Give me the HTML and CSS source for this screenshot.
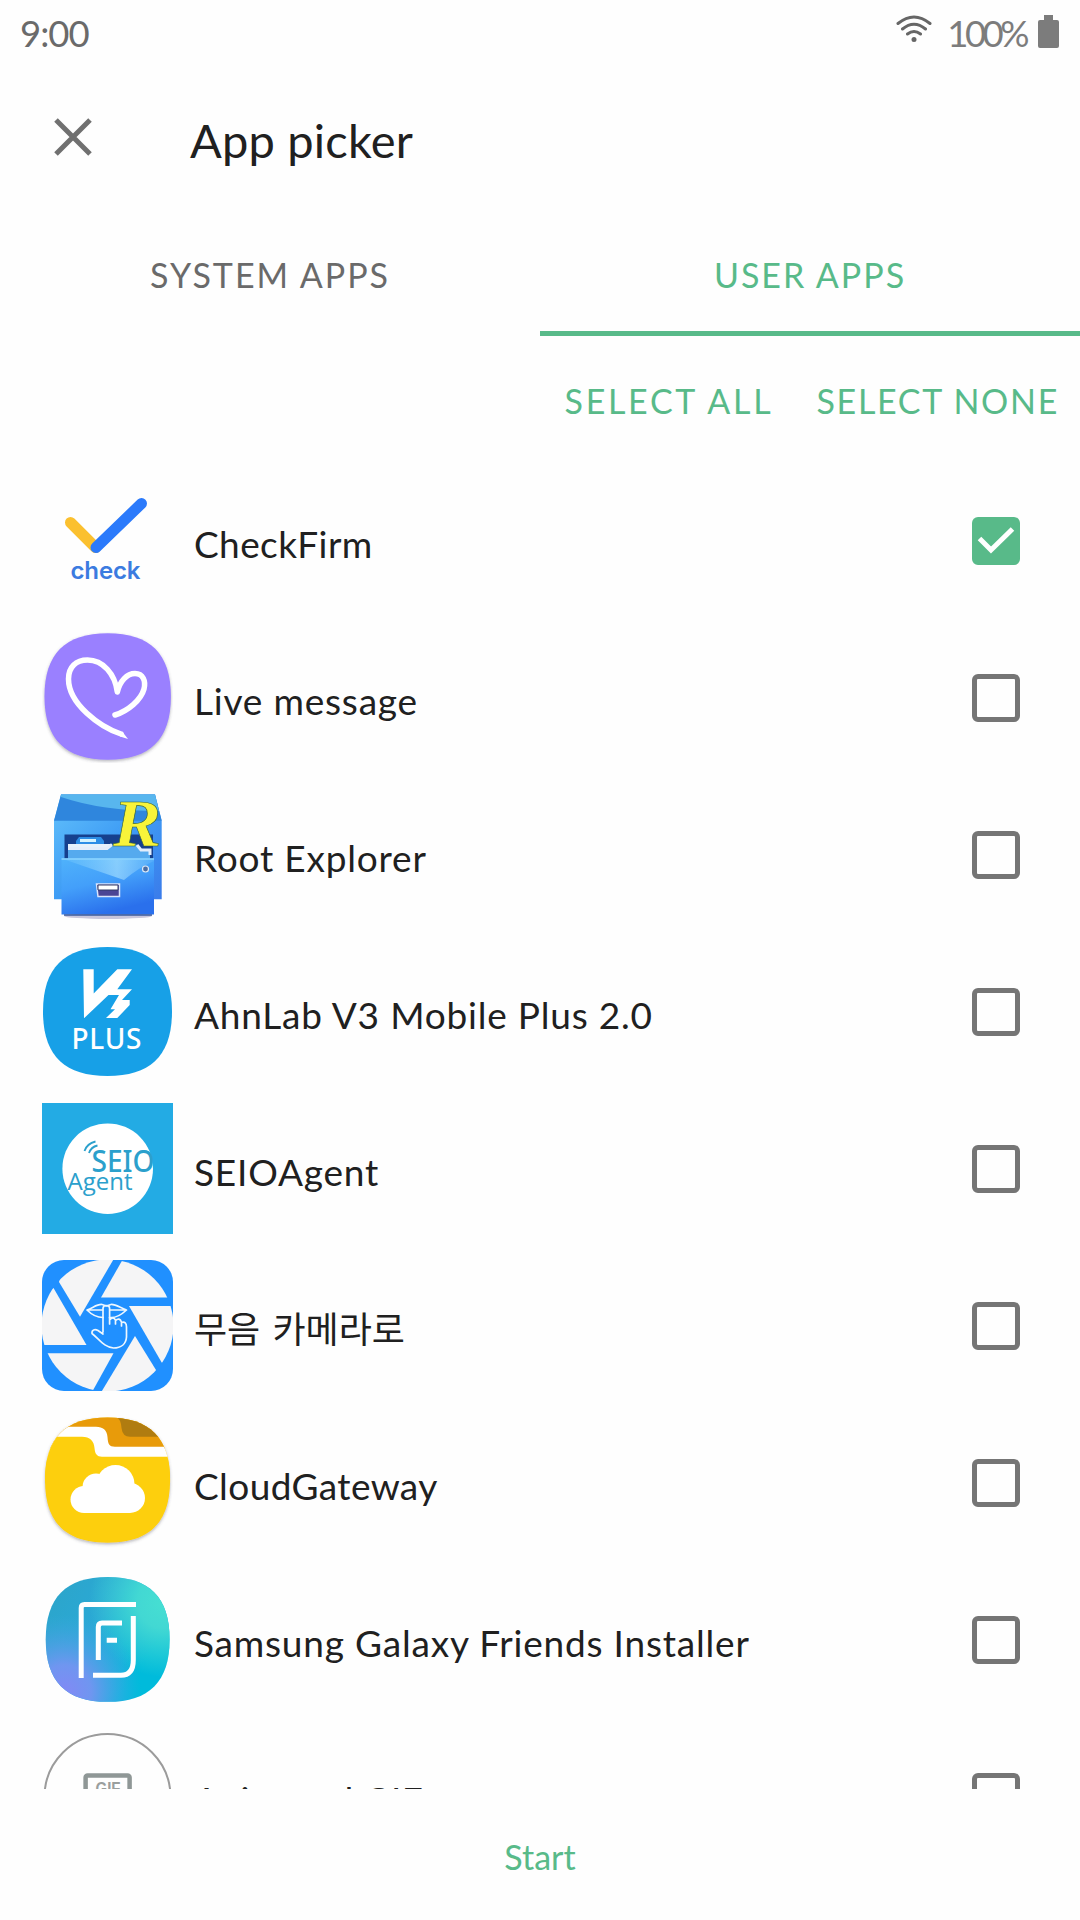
FILE: index.html
```
<!DOCTYPE html>
<html lang="en">
<head>
  <meta charset="UTF-8">
  <meta name="viewport" content="width=device-width, initial-scale=1.0">
  <title>App picker</title>
  <link rel="stylesheet" href="styles.css">
</head>
<body>
  <!-- Shared shapes -->
  <svg class="defs" width="0" height="0">
    <defs>
      <path id="squircle" d="M65.500 1C109 1 130 22 130 65.500S109 130 65.500 130 1 109 1 65.500 22 1 65.500 1Z"/>
      <clipPath id="squircleClip"><use href="#squircle" transform="translate(2 -.4) scale(.97)"/></clipPath>
      <clipPath id="lensClip"><circle cx="65.5" cy="65.5" r="66"/></clipPath>
      <linearGradient id="cabinet" x1="0" y1="0" x2="1" y2="1">
        <stop offset="0" stop-color="#63c2fb"/><stop offset=".5" stop-color="#3f9df5"/><stop offset="1" stop-color="#3a7bea"/>
      </linearGradient>
      <linearGradient id="drawer" x1="0" y1="0" x2=".4" y2="1">
        <stop offset="0" stop-color="#4fb2fb"/><stop offset=".5" stop-color="#439ffa"/><stop offset="1" stop-color="#2a70ec"/>
      </linearGradient>
      <linearGradient id="shine" x1="0" y1="0" x2="1" y2="0">
        <stop offset="0" stop-color="#7fd0ff" stop-opacity=".2"/><stop offset=".6" stop-color="#b9ecff" stop-opacity=".55"/><stop offset="1" stop-color="#b9ecff" stop-opacity=".1"/>
      </linearGradient>
      <radialGradient id="friendsTop" cx=".95" cy=".2" r=".6">
        <stop offset="0" stop-color="#46dfd2"/><stop offset=".35" stop-color="#42d8d3"/><stop offset="1" stop-color="#42d8d3" stop-opacity="0"/>
      </radialGradient>
      <radialGradient id="friendsLeft" cx=".15" cy=".92" r=".62">
        <stop offset="0" stop-color="#8289f5"/><stop offset=".35" stop-color="#6f96f0"/><stop offset="1" stop-color="#3fa6e4" stop-opacity="0"/>
      </radialGradient>
      <linearGradient id="friendsBase" x1="0" y1="0" x2="1" y2=".7">
        <stop offset=".1" stop-color="#2ca5cb"/><stop offset=".45" stop-color="#2aa9d6"/><stop offset=".85" stop-color="#00bbdb"/>
      </linearGradient>
      <filter id="soft" x="-10%" y="-10%" width="120%" height="120%">
        <feDropShadow dx="0" dy="1.5" stdDeviation="1.5" flood-color="#445" flood-opacity=".4"/>
      </filter>
    </defs>
  </svg>

  <div class="screen">
    <div class="status-bar">
      <span class="clock">9:00</span>
      <div class="status-icons">
        <svg class="wifi" width="36" height="30" viewBox="0 0 36 30" fill="none" stroke="#666" stroke-width="3" stroke-linecap="round">
          <path d="M2 9.500Q18-3.500 34 9.500M6.500 15Q18 5.500 29.500 15M11.500 20Q18 15 24.500 20"/>
          <circle cx="18" cy="25.500" r="2.500" fill="#666" stroke="none"/>
        </svg>
        <span class="battery-level">100%</span>
        <svg class="battery" width="21" height="33" viewBox="0 0 21 33" fill="#7c7c7c">
          <path d="M6 0h9v5h4a2 2 0 0 1 2 2v24a2 2 0 0 1-2 2H2a2 2 0 0 1-2-2V7a2 2 0 0 1 2-2h4z"/>
        </svg>
      </div>
    </div>

    <div class="toolbar">
      <svg class="close" width="38" height="38" viewBox="0 0 38 38" stroke="#707070" stroke-width="5">
        <path d="M2 2 36 36M36 2 2 36"/>
      </svg>
      <h1>App picker</h1>
    </div>

    <div class="tabs">
      <div class="tab">SYSTEM APPS</div>
      <div class="tab active">USER APPS</div>
    </div>

    <div class="actions">
      <span class="action-all">SELECT ALL</span>
      <span>SELECT NONE</span>
    </div>

    <div class="app-list">
      <div class="app">
        <svg class="icon" viewBox="0 0 131 131">
          <g fill="none" stroke-width="11" stroke-linecap="round">
            <path d="M28.500 47.500 53.500 72.500" stroke="#fbc02f"/>
            <path d="M54 72.500 99.500 28.500" stroke="#2b7afb"/>
          </g>
          <text x="28.500" y="104" class="check-label" textLength="70">check</text>
        </svg>
        <span class="name tight">CheckFirm</span>
        <span class="checkbox checked">
          <svg width="48" height="48" viewBox="0 0 48 48" fill="none" stroke="#fff" stroke-width="5"><path d="M7.500 21.500 19 33 40.500 12"/></svg>
        </span>
      </div>

      <div class="app">
        <svg class="icon" viewBox="0 0 131 131">
          <use href="#squircle" fill="#9a80ff" transform="translate(1.500 .3) scale(.98)" filter="url(#soft)"/>
          <path d="M79 102C58 95 26.500 72 26.500 47 26.500 35 34 28 45.500 28 61 28 73 42 75.300 60 78 49 85 41.500 93 41.500 101 41.500 104 49 102 57 99 68 86 79 73 83" fill="none" stroke="#fff" stroke-width="5.500" stroke-linecap="round" stroke-linejoin="round"/>
          <path d="M80 99.300 86 107 78 104.500Z" fill="#fff"/>
        </svg>
        <span class="name">Live message</span>
        <span class="checkbox"></span>
      </div>

      <div class="app">
        <svg class="icon" viewBox="0 0 131 131">
          <ellipse cx="66" cy="127" rx="44" ry="3" fill="#c9c6dc"/>
          <path d="M19 5.500H113L119.700 31.700V110.300H12V31.700Z" fill="url(#cabinet)"/>
          <path d="M19 5.500H113L119.700 31.700H12Z" fill="#2f86dd"/>
          <path d="M19 5.500H113L117 22Q60 22 19 8Z" fill="#58b6ee"/>
          <path d="M22.500 45.500H111V70H22.500Z" fill="#16408e"/>
          <path d="M34 52 37 48H59L62 52V58H34Z" fill="#2c8de6"/>
          <path d="M38 50H54V53H38Z" fill="#d3f2ff"/>
          <path d="M26 55H70L67 63H26Z" fill="#e6f1fb"/>
          <path d="M26 61H65L71 55H94L98 61H108V70H26Z" fill="#55aaee"/>
          <path d="M26 59.500H65L70 55.500M95 56 99 61H108V66" fill="none" stroke="#e3edfb" stroke-width="3"/>
          <path d="M19.500 69.500H112V125.500H19.500Z" fill="url(#drawer)"/>
          <path d="M19.500 69.500H112V72Q96 79 82 91Z" fill="url(#shine)"/>
          <path d="M19.500 70H112" stroke="#8bd4ff" stroke-width="1.500"/>
          <path d="M22 126H110" stroke="#385a9c" stroke-width="1.500"/>
          <path d="M54.500 95H77.500V107.500H56Z" fill="#4b4595" stroke="#d9e4fb" stroke-width="1.500"/>
          <path d="M56 96H76V101H56Z" fill="#fff" stroke="#333b66" stroke-width="1"/>
          <circle cx="103.500" cy="80" r="3" fill="#4a6da4" stroke="#dde8f5" stroke-width="1.200"/>
          <text x="71" y="57" class="root-letter" textLength="48" lengthAdjust="spacingAndGlyphs">R</text>
        </svg>
        <span class="name">Root Explorer</span>
        <span class="checkbox"></span>
      </div>

      <div class="app">
        <svg class="icon" viewBox="0 0 131 131">
          <use href="#squircle" fill="#17a0e7"/>
          <path d="M41.300 23.300H51.700V47.500L75.300 23.300H90L75.300 43.300H90L80 54H87.700V59L75.300 72H64L73 63.300H68.500L77 49H66.500L42 72.300Z" fill="#fff"/>
          <text x="29.500" y="102.500" class="plus-label" textLength="70">PLUS</text>
        </svg>
        <span class="name">AhnLab V3 Mobile Plus 2.0</span>
        <span class="checkbox"></span>
      </div>

      <div class="app">
        <svg class="icon" viewBox="0 0 131 131">
          <rect width="131" height="131" fill="#23abe4"/>
          <circle cx="65.700" cy="65.700" r="45.300" fill="#fff"/>
          <path d="M42.500 48Q45 40.500 53.500 38.500M47 50Q49 44 55.500 42.500" fill="none" stroke="#2ba0cc" stroke-width="1.800"/>
          <text x="49.500" y="69.300" class="seio-label" textLength="63" lengthAdjust="spacingAndGlyphs">SEIO</text>
          <text x="25.500" y="87" class="agent-label" textLength="65">Agent</text>
        </svg>
        <span class="name">SEIOAgent</span>
        <span class="checkbox"></span>
      </div>

      <div class="app">
        <svg class="icon" viewBox="0 0 131 131">
          <rect width="131" height="131" rx="22" fill="#2090ff"/>
          <!-- shutter blades -->
          <g fill="#f5f5f6" clip-path="url(#lensClip)">
            <path d="M38 56.700 17 22 25-10H77Z"/>
            <path d="M59 37.500 81-1H140L126 37.500Z"/>
            <path d="M87 46H140V110L119.700 102.500Z"/>
            <path d="M93 76 113.700 109.500 120 140H54.500Z"/>
            <path d="M71.500 93.300 49.500 133H-4V93.300Z"/>
            <path d="M44.500 85H-10V40L11.500 28Z"/>
          </g>
          <g fill="none" stroke="#eef7ff" stroke-width="1.700" stroke-linecap="round" stroke-linejoin="round">
            <path d="M45 50C51 48 55 44 60 44.500L64.500 46 69 44.500C74 44 78 48 84.500 50 77 57 71 58 67.500 57.500M61 57.500C56 57.500 50 55 45 50H60.500M68 50H84.500"/>
            <path d="M61 72V48.500Q61 45.500 64.300 45.500T67.600 48.500V64M67.600 60Q71 56 73.500 60V64M73.500 60.500Q77.500 57 79.500 62V66M79.500 62.500Q84.500 61 84.500 67V77C84 84 79 88 71.500 88 62 87 58 80 50 73.500 49.500 69.500 53 69 56 70.500L61 74"/>
          </g>
        </svg>
        <span class="name korean">무음 카메라로</span>
        <span class="checkbox"></span>
      </div>

      <div class="app">
        <svg class="icon" viewBox="0 0 131 131">
          <use href="#squircle" fill="#fdcf0d" transform="translate(2 -.4) scale(.97)" filter="url(#soft)"/>
          <g clip-path="url(#squircleClip)">
            <path d="M0 0H131V32H0Z" fill="#e89b0a"/>
            <path d="M74 0Q79 2 79.500 11 80.500 19.700 88 19.700H131V0Z" fill="#b07c10"/>
            <path d="M0 9.700H54C61 9.700 65 13 65.500 20 66 27 67 29.700 73 29.700H131V42H0Z" fill="#fff"/>
            <path d="M0 19.700H40C48 19.700 52 24 52.500 31 53 37 55 39.700 60 39.700H131V60H0Z" fill="#fdcf0d"/>
          </g>
          <g fill="#fff">
            <circle cx="42" cy="82.500" r="13.500"/>
            <circle cx="54" cy="70" r="13.500"/>
            <circle cx="73.500" cy="67" r="19"/>
            <circle cx="88" cy="81" r="15"/>
            <path d="M42 70H88V96H42Z"/>
          </g>
        </svg>
        <span class="name tight">CloudGateway</span>
        <span class="checkbox"></span>
      </div>

      <div class="app">
        <svg class="icon" viewBox="0 0 131 131">
          <g transform="translate(2.800 2.100) scale(.96 .967)">
            <use href="#squircle" fill="url(#friendsBase)"/>
            <use href="#squircle" fill="url(#friendsTop)"/>
            <use href="#squircle" fill="url(#friendsLeft)"/>
          </g>
          <g fill="none" stroke="#fff" stroke-width="5">
            <path d="M39.200 104V34Q39.200 30.500 42.500 30.500H94M91.300 42V86Q91.300 101.300 79 101.300H51"/>
            <path d="M56.300 86V53Q56.300 49 60 49H80M64.700 66.300H75"/>
          </g>
        </svg>
        <span class="name">Samsung Galaxy Friends Installer</span>
        <span class="checkbox"></span>
      </div>

      <div class="app">
        <svg class="icon" viewBox="0 0 131 131">
          <circle cx="65.500" cy="66" r="63" fill="none" stroke="#9b9b9b" stroke-width="2"/>
          <rect x="43.600" y="44.600" width="44" height="42" rx="2" fill="none" stroke="#8f9796" stroke-width="4.500"/>
          <text x="53.500" y="64" class="gif-label" textLength="25" lengthAdjust="spacingAndGlyphs">GIF</text>
        </svg>
        <span class="name tight">Animated GIF</span>
        <span class="checkbox"></span>
      </div>
    </div>

    <div class="footer">Start</div>
  </div>
</body>
</html>
```

FILE: styles.css
```
* {
  box-sizing: border-box;
}
body {
  margin: 0;
  background: #fefefe;
  color: #202020;
  font-family: Lato, "Noto Sans CJK KR", sans-serif;
}
.defs {
  position: absolute;
}
.screen {
  display: flex;
  flex-direction: column;
  width: 1080px;
  height: 1920px;
  overflow: hidden;
}

/* Status bar */
.status-bar {
  display: flex;
  justify-content: space-between;
  height: 68px;
  padding: 0 21px 0 20px;
  font-size: 36.5px;
  line-height: 67px;
  color: #6a6a6a;
}
.clock {
  letter-spacing: -1px;
}
.status-icons {
  display: flex;
}
.wifi {
  margin-top: 14px;
}
.battery {
  margin-top: 15px;
}
.battery-level {
  margin: 0 12px 0 15px;
  letter-spacing: -3.5px;
  color: #7c7c7c;
}

/* Toolbar */
.toolbar {
  display: flex;
  align-items: center;
  height: 142px;
  padding-left: 54px;
}
.toolbar h1 {
  margin: 2px 0 0 98px;
  font-size: 47px;
  font-weight: 400;
  letter-spacing: 0.2px;
}
.close {
  margin-bottom: 4px;
}

/* Tabs */
.tabs {
  display: flex;
  height: 126px;
}
.tab {
  flex: 1;
  padding-top: 2px;
  text-align: center;
  font-size: 34px;
  line-height: 126px;
  letter-spacing: 2px;
  color: #6a6a6a;
}
.tab.active {
  color: #58ba89;
  border-bottom: 5px solid #58ba89;
}
.actions {
  display: flex;
  justify-content: flex-end;
  gap: 43px;
  height: 126px;
  padding: 2px 21px 0 0;
  font-size: 34px;
  line-height: 126px;
  letter-spacing: 1.7px;
  color: #58ba89;
}
.action-all {
  letter-spacing: 2.7px;
}

/* App list */
.app-list {
  flex: 1;
  min-height: 0;
  overflow: hidden;
}
.app {
  display: flex;
  align-items: center;
  height: 157px;
  padding: 0 60px 0 42px;
}
.icon {
  width: 131px;
  height: 131px;
}
.name {
  flex: 1;
  margin: 5px 0 0 21px;
  font-size: 37px;
  letter-spacing: 0.8px;
  white-space: nowrap;
}
.name.tight {
  letter-spacing: 0.4px;
}
.name.korean {
  margin-top: 3px;
  font-size: 36px;
  letter-spacing: 0;
  word-spacing: 3px;
}
.checkbox {
  width: 48px;
  height: 48px;
  border: 5.5px solid #757575;
  border-radius: 6px;
}
.checkbox.checked {
  border: 0;
  background: #58ba89;
}
.checkbox svg {
  display: block;
}

/* Lettering inside the icons */
.check-label {
  font: 600 24px Inter, sans-serif;
  fill: #3b7be0;
}
.root-letter {
  font: italic bold 68px "Liberation Serif", serif;
  fill: #f8f43a;
  stroke: #35613a;
  stroke-width: 0.6px;
}
.plus-label {
  font: 500 28px "Noto Sans", sans-serif;
  fill: #fff;
}
.seio-label {
  font: 500 30px "Noto Sans", sans-serif;
  fill: #2ba0cc;
}
.agent-label {
  font: 24px "Open Sans", sans-serif;
  fill: #2ba0cc;
}
.gif-label {
  font: bold 18px "Liberation Sans", sans-serif;
  fill: #9a9f9e;
}

.footer {
  height: 131px;
  text-align: center;
  font-size: 34px;
  line-height: 136px;
  color: #58ba89;
}
```
